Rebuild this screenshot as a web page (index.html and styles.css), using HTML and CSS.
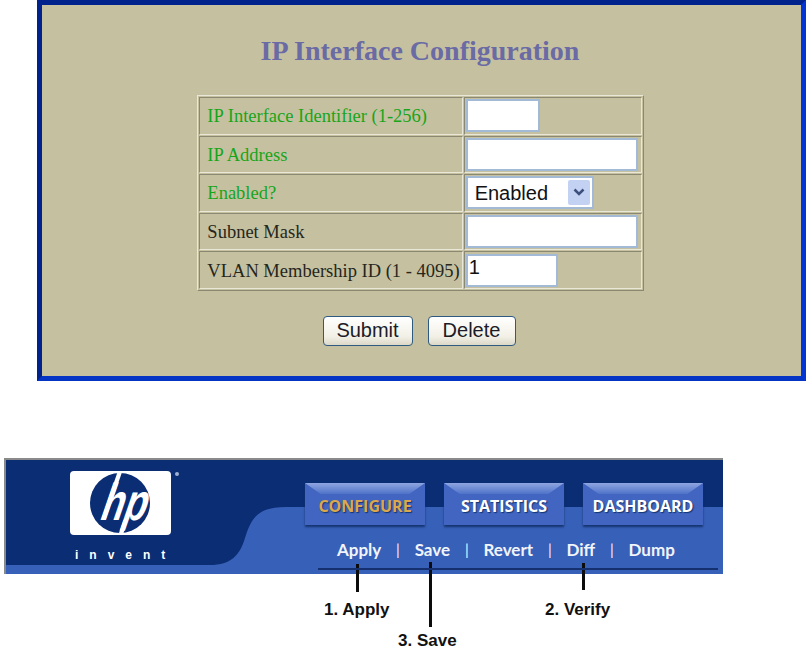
FILE: index.html
```html
<!DOCTYPE html>
<html lang="en">

<head>
    <meta charset="UTF-8">
    <title>IP Interface Configuration</title>
    <link rel="stylesheet" href="styles.css">
</head>

<body>

    <div class="panel">
        <h1>IP Interface Configuration</h1>
        <form>
            <table class="config-table">
                <tr>
                    <td class="required">IP Interface Identifier (1-256)</td>
                    <td><input type="text" class="w-short"></td>
                </tr>
                <tr>
                    <td class="required">IP Address</td>
                    <td><input type="text" class="w-long"></td>
                </tr>
                <tr>
                    <td class="required">Enabled?</td>
                    <td>
                        <div class="select-wrap">
                            <select>
                                <option>Enabled</option>
                                <option>Disabled</option>
                            </select>
                            <svg class="select-arrow" width="22" height="25" viewBox="0 0 22 25">
                                <rect width="22" height="25" rx="2" fill="#c3d2f2"/>
                                <path d="M6.500 9.500l4.500 4.500 4.500-4.500" fill="none" stroke="#3d4f7c" stroke-width="2.500"/>
                            </svg>
                        </div>
                    </td>
                </tr>
                <tr>
                    <td>Subnet Mask</td>
                    <td><input type="text" class="w-long"></td>
                </tr>
                <tr>
                    <td>VLAN Membership ID (1 - 4095)</td>
                    <td><input type="text" class="w-mid" value="1"></td>
                </tr>
            </table>
            <div class="buttons">
                <button type="button" class="btn-submit">Submit</button>
                <button type="button" class="btn-delete">Delete</button>
            </div>
        </form>
    </div>

    <div class="nav-area">
        <div class="nav">
            <!-- lighter blue shape behind the tabs -->
            <svg class="nav-bg" width="717" height="114" viewBox="0 0 717 114">
                <path d="M0 105H204C225 105 234 95 239 78C245 58 252 47 280 47H717V114H0Z" fill="#3760b8"/>
            </svg>

            <div class="logo">
                <svg width="112" height="66" viewBox="0 0 112 66">
                    <rect x="0" y="1" width="101" height="64" rx="4" fill="#fff"/>
                    <circle cx="50" cy="33" r="30" fill="#0a2d74"/>
                    <path d="M31 50h4.500L52.400 1h-4.500Z" fill="#fff"/>
                    <path d="M53.500 50H58L52.800 65h-4.500Z" fill="#fff"/>
                    <text class="logo-text" transform="translate(28 50) skewX(-19) scale(0.72 1)">hp</text>
                    <circle cx="107" cy="4" r="2" fill="#9fb0d0"/>
                </svg>
                <div class="invent">invent</div>
            </div>

            <div class="nav-main">
                <div class="tabs">
                    <a class="tab active">CONFIGURE</a>
                    <a class="tab">STATISTICS</a>
                    <a class="tab">DASHBOARD</a>
                </div>
                <div class="actions">
                    <a>Apply</a><span>|</span>
                    <a>Save</a><span>|</span>
                    <a>Revert</a><span>|</span>
                    <a>Diff</a><span>|</span>
                    <a>Dump</a>
                </div>
            </div>
        </div>

        <!-- callouts under the nav -->
        <i class="line line-apply"></i>
        <i class="line line-save"></i>
        <i class="line line-verify"></i>
        <b class="note note-apply">1. Apply</b>
        <b class="note note-save">3. Save</b>
        <b class="note note-verify">2. Verify</b>
    </div>

</body>

</html>
```

FILE: styles.css
```css
html, body {
    height: 662px;
    overflow: hidden;
}

body {
    margin: 0;
    padding: 0;
    background-color: #fff;
    font-family: "Liberation Serif", serif;
}

.panel {
    box-sizing: border-box;
    width: 769px;
    height: 381px;
    margin-left: 37px;
    padding-top: 36px;
    background-color: #c5c1a0;
    border: 5px solid #00228c;
    border-right-color: #0434d4;
    border-bottom-color: #0434c4;
}

h1 {
    margin: 0 0 35px;
    padding-right: 3px;
    height: 19px;
    line-height: 19px;
    text-align: center;
    font-size: 28px;
    font-weight: bold;
    color: #6a6aa5;
}

.config-table {
    width: 442px;
    margin: 0 auto;
    position: relative;
    left: -1px;
    border: 1px solid;
    border-color: #e9e7d8 #8b8872 #8b8872 #e9e7d8;
    border-spacing: 1px;
}

.config-table td {
    height: 37.600px;
    padding: 2px 2px 0 7px;
    box-sizing: border-box;
    border: 1px solid;
    border-color: #8b8872 #e9e7d8 #e9e7d8 #8b8872;
    font-size: 18.500px;
    color: #26261c;
    white-space: nowrap;
}

.config-table td + td {
    width: 177px;
    padding: 0 3px 0 1px;
}

.config-table td.required {
    color: #17a51a;
}

input[type="text"] {
    display: block;
    box-sizing: border-box;
    height: 33px;
    padding: 0 1px 6px;
    background-color: #fff;
    border: 2px solid #a3bad6;
    font-family: "Liberation Sans", sans-serif;
    font-size: 20px;
    color: #111;
}

.w-short { width: 74px; }
.w-long { width: 172px; }
.w-mid { width: 92px; }

.select-wrap {
    position: relative;
    width: 128px;
}

select {
    display: block;
    box-sizing: border-box;
    width: 128px;
    height: 33px;
    padding: 1px 0 0 7px;
    appearance: none;
    background-color: #fff;
    border: 2px solid #a3bad6;
    border-radius: 0;
    font-family: "Liberation Sans", sans-serif;
    font-size: 20px;
    color: #111;
}

.select-arrow {
    position: absolute;
    top: 4px;
    right: 4px;
}

.buttons {
    display: flex;
    justify-content: center;
    gap: 15px;
    margin-top: 25px;
    padding-right: 5px;
}

button {
    box-sizing: border-box;
    height: 30px;
    padding: 0;
    background: linear-gradient(#fff, #f2f0e6 70%, #dcd8c8);
    border: 1.500px solid #2f5a80;
    border-radius: 4px;
    font-family: "Liberation Sans", sans-serif;
    font-size: 20px;
    color: #1c1c28;
}

.btn-submit { width: 90px; }
.btn-delete { width: 88px; }

.nav-area {
    position: relative;
    height: 204px;
    margin: 77px 0 0 4px;
}

.nav {
    position: relative;
    display: flex;
    box-sizing: border-box;
    width: 719px;
    height: 116px;
    background-color: #0a2d74;
    border-top: 2px solid #8a8a8a;
    border-left: 2px solid #8a8a8a;
    border-bottom: 2px solid #8a8a8a;
}

.nav-bg {
    position: absolute;
    top: 0;
    left: 0;
}

.logo {
    position: relative;
    width: 112px;
    margin: 10px 0 0 64px;
}

.logo svg {
    display: block;
}

.logo-text {
    font-family: "Liberation Sans", sans-serif;
    font-size: 52px;
    font-weight: bold;
    fill: #fff;
}

.invent {
    margin: 12px 0 0 5px;
    font-family: "Liberation Sans", sans-serif;
    font-size: 12px;
    font-weight: bold;
    letter-spacing: 11px;
    color: #fff;
    white-space: nowrap;
}

.nav-main {
    position: relative;
    margin-left: 123px;
    padding-top: 23px;
}

.tabs {
    display: flex;
    gap: 19px;
}

.tab {
    position: relative;
    display: flex;
    align-items: center;
    justify-content: center;
    width: 120px;
    height: 42px;
    padding-top: 3px;
    box-sizing: border-box;
    background: #4165c0;
    box-shadow: 0 2px 2px #14336f;
    font-family: "Open Sans", sans-serif;
    font-size: 16px;
    font-weight: bold;
    color: #fff;
    text-shadow: 1px 1px 1px #14336f;
}

.tab::before {
    content: "";
    position: absolute;
    top: 0;
    left: 0;
    right: 0;
    height: 11px;
    background: linear-gradient(#8fa6e0, #4f72c8);
    clip-path: polygon(0 0, 100% 0, 87% 100%, 13% 100%);
}

.tab.active {
    color: #dba94c;
}

.actions {
    display: flex;
    align-items: center;
    gap: 14.800px;
    width: 385px;
    height: 24px;
    margin: 12px 0 0 13px;
    padding-left: 19px;
    font-family: "Lato", sans-serif;
    font-size: 17px;
    font-weight: bold;
    color: #f1f4fb;
}

.actions span {
    font-weight: normal;
    font-size: 15px;
}

.nav-area::after {
    content: "";
    position: absolute;
    top: 110px;
    left: 314px;
    width: 400px;
    height: 2px;
    background-color: #14306e;
}

.line {
    position: absolute;
    width: 3px;
    background-color: #0c0c0c;
}

.line-apply { left: 352px; top: 106px; height: 28px; }
.line-save { left: 425px; top: 104px; height: 65px; }
.line-verify { left: 578px; top: 105px; height: 27px; }

.note {
    position: absolute;
    font-family: "Liberation Sans", sans-serif;
    font-size: 17px;
    color: #111;
    white-space: nowrap;
}

.note-apply { left: 320px; top: 142px; }
.note-save { left: 394px; top: 173px; }
.note-verify { left: 541px; top: 142px; }
```
